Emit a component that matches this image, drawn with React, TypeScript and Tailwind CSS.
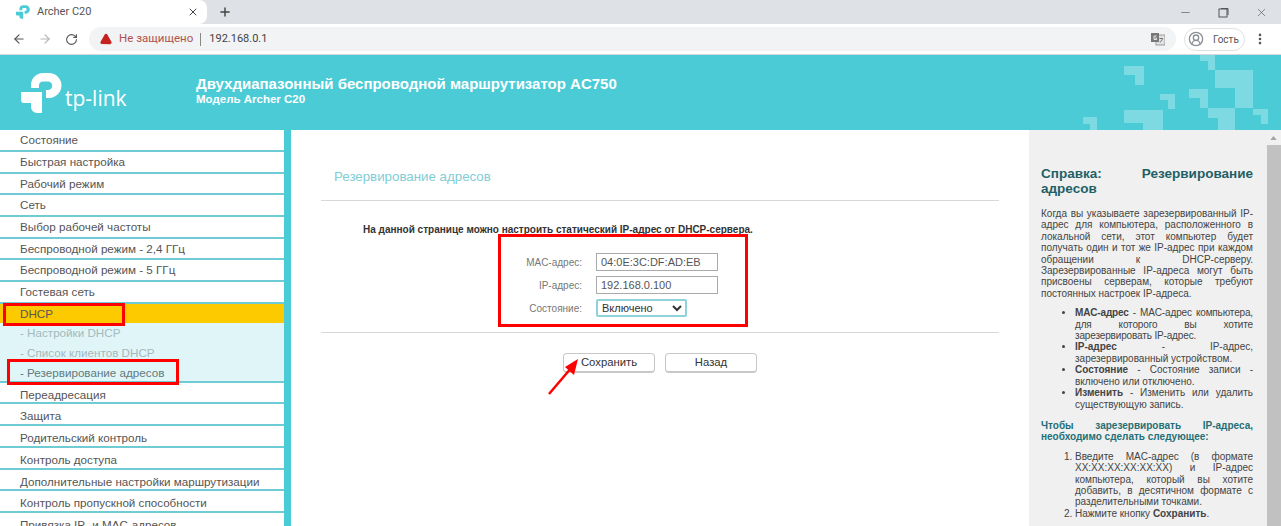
import { ArrowLeft, ArrowRight, RotateCw, X, Plus, Minus, MoreVertical, TriangleAlert, CircleUserRound } from "lucide-react";

const topItems = [
  "Состояние",
  "Быстрая настройка",
  "Рабочий режим",
  "Сеть",
  "Выбор рабочей частоты",
  "Беспроводной режим - 2,4 ГГц",
  "Беспроводной режим - 5 ГГц",
  "Гостевая сеть",
];

const bottomItems = [
  "Переадресация",
  "Защита",
  "Родительский контроль",
  "Контроль доступа",
  "Дополнительные настройки маршрутизации",
  "Контроль пропускной способности",
  "Привязка IP- и MAC-адресов",
];

function LogoMark({ className }: { className: string }) {
  return (
    <svg viewBox="0 0 41 40" className={className} fill="currentColor">
      <path d="M10 15 V12 A12 12 0 0 1 22 0 H28 A12.5 12.5 0 0 1 28 25 H25 V17 H27 A4.2 4.2 0 0 0 27 8.5 H22 A4 4 0 0 0 18 12 V15 Z" />
      <path d="M0 19 H21 V40 H16 A6 6 0 0 1 10 34 V30 H3 A3 3 0 0 1 0 27 Z" />
    </svg>
  );
}

function TranslateIcon() {
  return (
    <svg viewBox="0 0 14 14" className="ml-auto h-[14px] w-[14px]">
      <rect x="5" y="3" width="9" height="10" fill="#e2e2e2" stroke="#8a8a8a" strokeWidth="0.8" />
      <rect x="0" y="1" width="8" height="9" fill="#777" />
      <path d="M5.5 4 H3 V7.5 H5.5 V6 H4.2" fill="none" stroke="#e8e8e8" strokeWidth="1" />
      <path d="M8.5 6.5 H12 M10.2 6 V7 M9 10.5 L11.5 7" fill="none" stroke="#666" strokeWidth="0.8" />
    </svg>
  );
}

function NavRow({ label, leading }: { label: string; leading: string }) {
  return (
    <div className={`h-[21.7px] border-b-2 border-[#6fcbd4] pl-5 text-[11.65px] ${leading} text-[#555] whitespace-nowrap`}>
      {label}
    </div>
  );
}

function HeaderPattern() {
  const shapes = [
    "41,0 56,0 56,15 49,15 49,6 41,6",
    "-35,11 -15,11 -15,30 -24,30 -24,20 -35,20",
    "56,15 94,15 94,53 76,53 76,33 56,33",
    "1,39 16,39 16,54 9,54 9,45 1,45",
    "30,34 49,34 49,53 41,53 41,43 30,43",
    "49,53 76,53 76,75 59,75 59,63 49,63",
    "94,54 109,54 109,69 102,69 102,60 94,60",
    "-35,55 4,55 4,75 -16,75 -16,68 -35,68",
    "-76,62 -62,62 -62,75 -69,75 -69,69 -76,69",
  ];
  return (
    <svg viewBox="-80 0 200 75" className="absolute right-[2px] top-0 h-[75px] w-[200px]" fill="#7ddae2">
      {shapes.map((points) => (
        <polygon key={points} points={points} />
      ))}
    </svg>
  );
}

function FormRow({ label, children }: { label: string; children: React.ReactNode }) {
  return (
    <div className="flex items-center gap-[14px]">
      <span className="w-[91px] text-right text-[10px] text-[#777]">{label}</span>
      {children}
    </div>
  );
}

function Button({ label }: { label: string }) {
  return (
    <button className="h-[20px] w-[92px] rounded-[4px] border border-[#c8c8c8] border-b-2 bg-white text-[11.3px] text-[#333]">
      {label}
    </button>
  );
}

export default function App() {
  return (
    <div className="relative flex h-[526px] w-[1281px] flex-col overflow-hidden bg-white font-['Liberation_Sans',Arial,sans-serif]">
      <div className="flex h-[24px] items-center bg-[#dee1e6]">
        <div className="flex h-full w-[207px] items-center rounded-tr-lg rounded-br-lg bg-white pl-[16px] pr-[8px]">
          <LogoMark className="h-[14px] w-[14px] text-[#4acbd6]" />
          <span className="ml-[7px] flex-1 font-['Roboto',sans-serif] text-[11px] text-[#555]">Archer C20</span>
          <X size={12} strokeWidth={2} className="text-[#444]" />
        </div>
        <Plus size={14} strokeWidth={2.5} className="ml-[11px] text-[#444]" />
        <div className="ml-auto flex items-center gap-[26px] pr-[13px] text-[#555]">
          <Minus size={13} strokeWidth={1.2} />
          <svg width="11" height="11" viewBox="0 0 11 11" fill="none" stroke="currentColor">
            <rect x="1" y="2" width="8" height="8" />
            <path d="M3 1.5 H10 V8" />
          </svg>
          <X size={13} strokeWidth={1.2} />
        </div>
      </div>

      <div className="flex h-[31px] items-center border-b border-[#d6d8db] bg-white">
        <ArrowLeft size={14} strokeWidth={2} className="ml-[12px] text-[#555]" />
        <ArrowRight size={14} strokeWidth={2} className="ml-[12px] text-[#b5b5b5]" />
        <RotateCw size={13} strokeWidth={2} className="ml-[13px] text-[#555]" />
        <div className="ml-[11px] flex h-[24px] w-[1087px] items-center rounded-full bg-[#f1f3f4] pl-[10px] pr-[11px] font-['Roboto',sans-serif]">
          <TriangleAlert size={12} strokeWidth={2.5} className="ml-[1px] fill-[#c5221f] text-[#c5221f]" />
          <span className="ml-[7px] text-[11.5px] text-[#b0524e]">Не защищено</span>
          <span className="ml-[7px] mr-[8px] h-[13px] w-px bg-[#888]" />
          <span className="text-[11px] text-[#444]">192.168.0.1</span>
          <TranslateIcon />
        </div>
        <div className="ml-[8px] flex h-[23px] w-[61px] items-center gap-[9px] rounded-full border border-[#e0e0e0] pl-[3px] font-['Roboto',sans-serif] text-[10px] text-[#555]">
          <CircleUserRound size={16} className="text-[#8a8f94]" />
          Гость
        </div>
        <MoreVertical size={14} strokeWidth={2.5} className="ml-[8px] text-[#555]" />
      </div>

      <header className="relative flex h-[75px] shrink-0 items-center bg-[#4bcbd6] text-white">
        <div className="flex w-[196px] items-end pl-[21px]">
          <LogoMark className="h-[40px] w-[41px] text-white" />
          <span className="ml-[3px] font-['Open_Sans',sans-serif] text-[21px] leading-[30px]">tp-link</span>
        </div>
        <div className="mt-[-3px] font-bold">
          <div className="text-[15px] leading-[17px]">Двухдиапазонный беспроводной маршрутизатор AC750</div>
          <div className="text-[11.5px] leading-[15px]">Модель Archer C20</div>
        </div>
        <HeaderPattern />
      </header>

      <div className="flex min-h-0 flex-1">
        <nav className="w-[291px] shrink-0 border-r-[7px] border-[#4bcbd6] pt-[0.3px]">
          {topItems.map((item) => (
            <NavRow key={item} label={item} leading="leading-[19px]" />
          ))}
          <div className="h-[21px] bg-[#fdca00] pl-5 text-[11.65px] leading-[19px] text-[#555]">DHCP</div>
          <div className="h-[60px] border-b-2 border-[#6fcbd4] bg-[#e0f5f8] pl-5 text-[11.65px] leading-[20px]">
            <div className="-mt-[2px] text-[#a3b9bc]">- Настройки DHCP</div>
            <div className="text-[#a3b9bc]">- Список клиентов DHCP</div>
            <div className="text-[#607a7e]">- Резервирование адресов</div>
          </div>
          {bottomItems.map((item) => (
            <NavRow key={item} label={item} leading="leading-[23px]" />
          ))}
        </nav>

        <main className="w-[738px] shrink-0 pl-[30px] pr-[30px]">
          <h2 className="h-[71px] border-b border-[#d8d8d8] pl-[13px] pt-[39px] text-[13.3px] leading-[16px] text-[#7fcdd6]">
            Резервирование адресов
          </h2>
          <p className="pl-[42px] pt-[22px] text-[10px] font-bold leading-[13px] text-[#333]">
            На данной странице можно настроить статический IP-адрес от DHCP-сервера.
          </p>
          <div className="flex h-[97px] flex-col gap-[5px] border-b border-[#d8d8d8] pl-[170px] pt-[17px]">
            <FormRow label="MAC-адрес:">
              <input
                readOnly
                value="04:0E:3C:DF:AD:EB"
                className="h-[18px] w-[122px] border border-[#aaa] px-[4px] text-[11px] text-[#555]"
              />
            </FormRow>
            <FormRow label="IP-адрес:">
              <input
                readOnly
                value="192.168.0.100"
                className="h-[18px] w-[122px] border border-[#aaa] px-[4px] text-[11px] text-[#555]"
              />
            </FormRow>
            <FormRow label="Состояние:">
              <select
                defaultValue="on"
                className="h-[18px] w-[91px] rounded-[2px] border-2 border-[#8fd3d9] text-[11px] text-[#333]"
              >
                <option value="on">Включено</option>
              </select>
            </FormRow>
          </div>
          <div className="flex gap-[10px] pl-[242px] pt-[20px]">
            <Button label="Сохранить" />
            <Button label="Назад" />
          </div>
        </main>

        <aside className="relative min-w-0 flex-1 overflow-hidden bg-[#f0f0f0] pl-[12px] pr-[28px] pt-[36px] text-[10px] leading-[11.4px] text-[#444]">
          <div className="absolute right-0 top-0 h-full w-[14px] bg-[#f1f1f1]">
            <svg viewBox="0 0 8 5" className="ml-[3px] mt-[6px] h-[4px] w-[7px]" fill="#a3a3a3">
              <polygon points="4,0 8,5 0,5" />
            </svg>
            <div className="mt-[5px] h-full bg-[#c1c1c1]" />
          </div>
          <h3 className="text-justify text-[13.5px] font-bold leading-[15px] text-[#1f5f66]">
            Справка: Резервирование адресов
          </h3>
          <p className="mt-[12px] text-justify">
            Когда вы указываете зарезервированный IP-адрес для компьютера, расположенного в локальной сети, этот компьютер будет получать один и тот же IP-адрес при каждом обращении к DHCP-серверу. Зарезервированные IP-адреса могут быть присвоены серверам, которые требуют постоянных настроек IP-адреса.
          </p>
          <ul className="mt-[8px] list-disc pl-[34px] text-justify">
            <li className="tracking-[-0.15px]"><b>MAC-адрес</b> - MAC-адрес компьютера, для которого вы хотите зарезервировать IP-адрес.</li>
            <li><b>IP-адрес</b> - IP-адрес, зарезервированный устройством.</li>
            <li><b>Состояние</b> - Состояние записи - включено или отключено.</li>
            <li><b>Изменить</b> - Изменить или удалить существующую запись.</li>
          </ul>
          <p className="mt-[10px] text-justify font-bold text-[#1f6f76]">
            Чтобы зарезервировать IP-адреса, необходимо сделать следующее:
          </p>
          <ol className="mt-[8px] list-decimal pl-[34px] text-justify">
            <li>Введите MAC-адрес (в формате XX:XX:XX:XX:XX:XX) и IP-адрес компьютера, который вы хотите добавить, в десятичном формате с разделительными точками.</li>
            <li>Нажмите кнопку <b>Сохранить</b>.</li>
          </ol>
        </aside>
      </div>

      <div className="absolute left-[3px] top-[303px] h-[23px] w-[122px] border-[3px] border-[#f00]" />
      <div className="absolute left-[7px] top-[359px] h-[26px] w-[172px] border-[3px] border-[#f00]" />
      <div className="absolute left-[498px] top-[234px] h-[93px] w-[250px] border-[3px] border-[#f00]" />
      <svg className="absolute left-[545px] top-[355px] h-[42px] w-[38px]" viewBox="0 0 38 42">
        <path d="M4 39 L27 12" stroke="#f00" strokeWidth="2.5" />
        <polygon points="33,4 20,12 29,20" fill="#f00" />
      </svg>
    </div>
  );
}
